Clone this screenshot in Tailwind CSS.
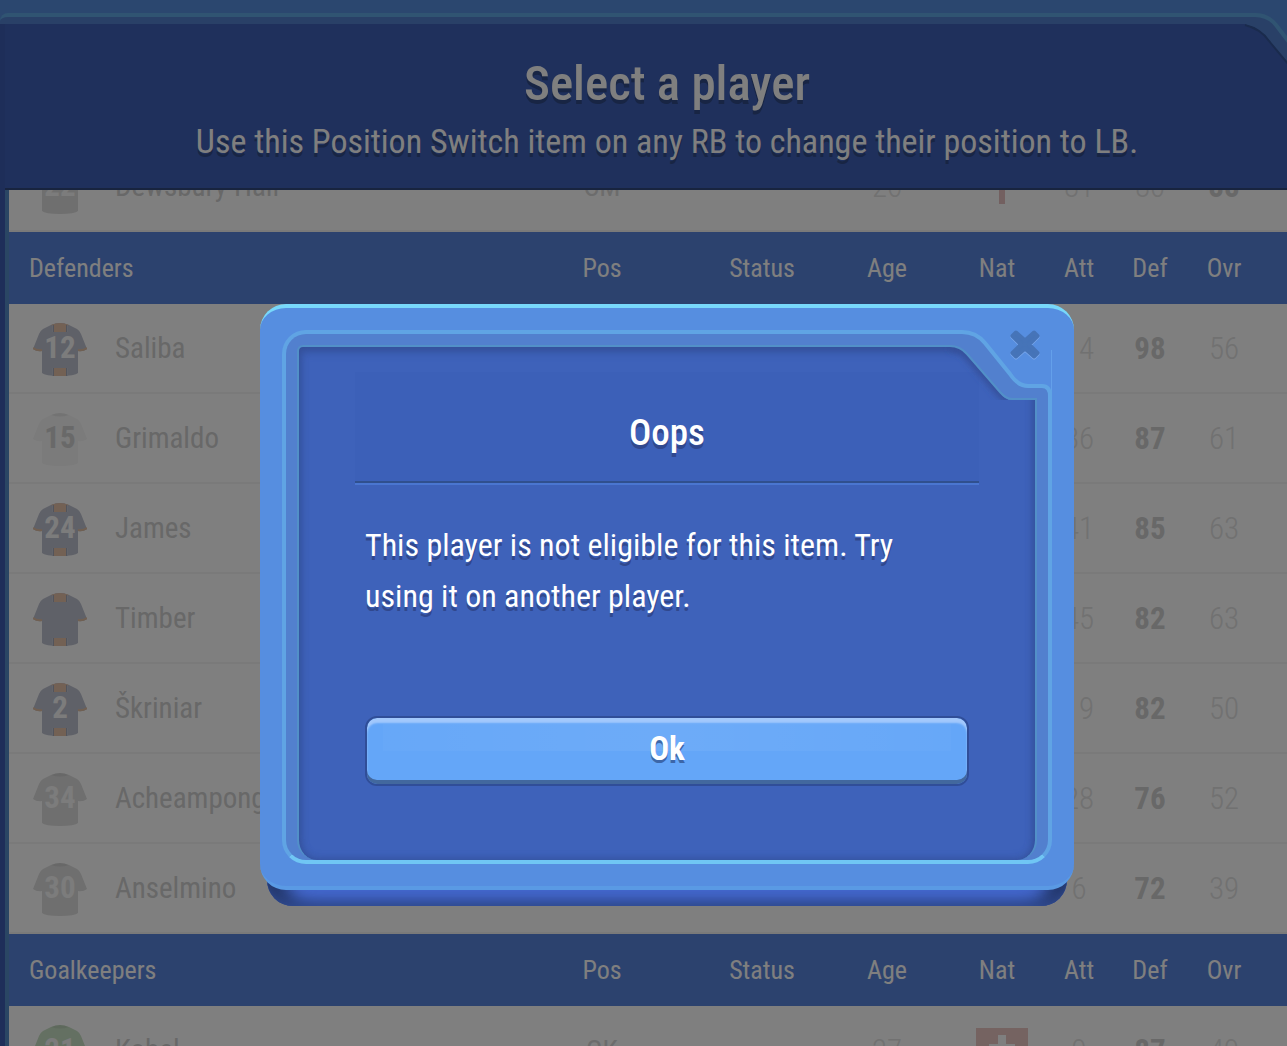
<!DOCTYPE html>
<html lang="en">
<head>
    <meta charset="UTF-8">
    <meta name="viewport" content="width=device-width, initial-scale=1.0">
    <title>Select a player</title>
    <script src="https://cdn.jsdelivr.net/npm/@tailwindcss/browser@4"></script>
</head>
<body class="bg-[#568ede] font-['Roboto_Condensed','Roboto',sans-serif] text-white">

    <!-- Shirt shapes shared by all rows -->
    <svg class="hidden" aria-hidden="true">
        <symbol id="shirt" viewBox="0 0 54 54">
            <path d="M18 2Q27 -2 36 2L44 6Q47 8 48 11L54 26Q50 29 45 28V50Q42 53 27 53Q12 53 9 50V28Q4 29 0 26L6 11Q7 8 10 6Z" fill="currentColor"/>
            <path d="M18 2Q27 -2 36 2Q27 5 18 2Z" fill="#000" opacity=".06"/>
        </symbol>
        <symbol id="stripes" viewBox="0 0 54 54">
            <path d="M19 2h16v7H19zM19 45h16v8H19z" fill="#c6cad6"/>
            <path d="M18 2Q27 -2 36 2L33 3V9H21V3ZM21 45h12v8H21z" fill="#e6c2a8"/>
            <path d="M20.500 2v7M33.500 2v7M20.500 45v8M33.500 45v8" stroke="#a4a8b8" stroke-width="1"/>
            <path d="M0 25Q4 28 9 27M54 25Q50 28 45 27" stroke="#e2c0a4" stroke-width="2" fill="none"/>
        </symbol>
    </svg>

    <div class="relative h-screen overflow-hidden">
        <div class="relative -mr-[42px] pt-[13px]">
            <!-- Outer frame -->
            <div class="rounded-tl-lg border-t-4 border-[#60a8e4] bg-[#5280ce] pt-[7px]">
                <div class="bg-[#3c5cb2] pl-[5px]">
                    <header class="relative z-10 flex h-[166px] flex-col items-center justify-center border-b-2 border-[#30487e] bg-[#3e60b8] pt-[10px] text-center">
                        <h1 class="text-[49px]/[60px] font-medium [text-shadow:0_4px_0_#304a88]">Select a player</h1>
                        <p class="text-[34px]/[54px] [text-shadow:0_4px_0_#304a88]">Use this Position Switch item on any RB to change their position to LB.</p>
                    </header>
                    <main class="-mt-12 border-l-4 border-[#548cc8] bg-white">
                        <table class="w-full table-fixed border-collapse text-center">
                            <colgroup>
                                <col class="w-[106px]"><col>
                                <col class="w-[170px]"><col class="w-[150px]"><col class="w-[100px]">
                                <col class="w-[120px]"><col class="w-[44px]"><col class="w-[98px]">
                                <col class="w-[50px]"><col class="w-[80px]">
                            </colgroup>
                            <tbody id="squad"></tbody>
                        </table>
                    </main>
                </div>
            </div>
        </div>

        <!-- Cut corner of the outer frame -->
        <svg class="absolute top-0 right-0 z-10 h-20 w-20" viewBox="0 0 80 80" aria-hidden="true">
            <path d="M30 13H80V62L62 40Q54 28 38 24H30Z" fill="#568ede"/>
            <path d="M30 15H48Q61 15 69 25L80 39V62L62 40Q54 28 38 24H30Z" fill="#5280ce"/>
            <path d="M30 15H48Q61 15 69 25L82 42" fill="none" stroke="#60a8e4" stroke-width="4"/>
            <path d="M38 25Q54 29 62 41L82 65" fill="none" stroke="#34569a" stroke-width="2"/>
        </svg>

        <!-- Dialog -->
        <div class="absolute inset-0 z-20 -mr-[47px] flex items-start justify-center bg-black/50 pt-[304px]">
            <section role="dialog" aria-modal="true" aria-labelledby="dialog-title" class="relative w-[814px] max-w-full">
                <div class="absolute inset-x-[7px] top-20 -bottom-4 rounded-[26px] bg-[#4468cc] shadow-[inset_0_-6px_14px_-4px_#34509a,inset_22px_0_18px_-4px_#203260,inset_-22px_0_18px_-4px_#203260]"></div>
                <div class="relative rounded-[26px] border-y-4 border-t-[#78d8fa] border-b-[#5a9ae4] bg-[#568ee0] p-[22px]">
                    <div class="rounded-3xl border-4 border-[#60a4e4] border-b-[#70c6f4] bg-[#5280ce] px-[11px] pt-[11px]">
                        <div class="rounded-t-md rounded-b-[20px] border-2 border-b-0 border-[#5290c8] bg-[#3e62ba] px-14 pt-[25px] pb-[74px] shadow-[inset_0_4px_10px_#34509a,inset_0_0_8px_#34509a]">
                            <div class="flex h-[111px] items-center justify-center border-b-2 border-[#30508e] bg-[#3c60b8] pt-3 shadow-[0_2px_0_#4a76d0]">
                                <h2 id="dialog-title" class="text-[37px]/[48px] font-medium [text-shadow:0_4px_0_#30488e]">Oops</h2>
                            </div>
                            <div class="px-[10px] pt-[37px]">
                                <p class="min-h-[196px] max-w-[560px] text-[32px]/[51px] [text-shadow:0_4px_0_#30488e]">This player is not eligible for this item. Try using it on another player.</p>
                                <button type="button" class="relative flex h-[70px] w-full items-center justify-center rounded-xl border-2 border-[#304e98] bg-[#64a6f8] pb-1 text-[33px] font-bold shadow-[inset_0_-4px_0_#42689e,inset_0_5px_2px_#a2c8fc] before:absolute before:inset-x-4 before:top-[6px] before:h-[27px] before:bg-linear-to-r before:from-white/2 before:via-white/6 before:to-white/2 [text-shadow:0_3px_0_#3c66a8]"><span class="relative">Ok</span></button>
                            </div>
                        </div>
                    </div>
                </div>

                <!-- Cut corner behind the close button -->
                <svg class="absolute top-[26px] right-[22px] h-[70px] w-[122px]" viewBox="0 0 122 70" aria-hidden="true">
                    <defs>
                        <filter id="soft" x="-20%" y="-20%" width="140%" height="140%"><feGaussianBlur stdDeviation="3"/></filter>
                        <clipPath id="well"><path d="M0 16H20Q30 16 37 24L70 62Q74 70 82 70H0Z"/></clipPath>
                    </defs>
                    <path d="M20 0H122V60H68L32 16H20Z" fill="#568ee0"/>
                    <path d="M0 2H32Q46 2 55 13L80 44Q86 56 98 56H112Q120 56 120 64V70H107H82Q76 70 70 64L37 24Q30 16 20 16H0Z" fill="#5280ce"/>
                    <path clip-path="url(#well)" d="M20 17Q30 17 37 25L70 63L79 70" fill="none" stroke="#34509a" stroke-width="8" filter="url(#soft)"/>
                    <path d="M0 16H20Q30 16 37 24L70 62Q76 69 82 69H107" fill="none" stroke="#5290c8" stroke-width="2"/>
                    <path d="M0 2H32Q46 2 55 13L80 44Q88 56 98 56H112Q120 56 120 66V70" fill="none" stroke="#60a4e4" stroke-width="4"/>
                    <path d="M121.500 20V60" stroke="#64a0ea" stroke-width="1"/>
                </svg>
                <button type="button" aria-label="Close" class="absolute top-[26px] right-[34px] size-[30px]">
                    <svg class="size-[30px]" viewBox="0 0 30 30" fill="none" stroke-width="4" stroke-linejoin="round">
                        <path d="M6 3.500 15 11.500 24 3.500 27.500 7 19 15.500 27.500 24 24 27.500 15 19.500 6 27.500 2.500 24 11 15.500 2.500 7Z" fill="#7aa8ec" stroke="#7aa8ec"/>
                        <path d="M6 2.500 15 10.500 24 2.500 27.500 6 19 14.500 27.500 23 24 26.500 15 18.500 6 26.500 2.500 23 11 14.500 2.500 6Z" fill="#4674b8" stroke="#4674b8"/>
                    </svg>
                </button>
            </section>
        </div>
    </div>

    <script>
        const navy = { shirt: 'text-[#bec2d0]', digits: 'fill-[#f8f8f8]', stripes: true };
        const grey = { shirt: 'text-[#dedede]', digits: 'fill-[#f8f8f8]' };
        const white = { shirt: 'text-[#f6f6f6]', digits: 'fill-[#d2d2d2]' };
        const green = { shirt: 'text-[#c8e0c4]', digits: 'fill-[#f6f6f6]' };

        const england = '<svg class="mx-auto h-[34px] w-[52px]" viewBox="0 0 52 34"><path d="M0 14h23V0h6v14h23v6H29v14h-6V20H0z" fill="#e6c0c0"/></svg>';
        const swiss = '<svg class="mx-auto h-[46px] w-[52px]" viewBox="0 0 52 46"><path fill="#eac6c2" d="M0 0h52v46H0z"/><path fill="#fff" d="M22 7h8v9h9v8h-9v9h-8v-9h-9v-8h9z"/></svg>';

        // number, name, position, age, nation, att, def, ovr, kit, main rating
        const groups = [
            { players: [[22, 'Dewsbury-Hall', 'CM', 26, england, 81, 80, 88, grey, 'ovr']] },
            { title: 'Defenders', players: [
                [12, 'Saliba', '', '', '', 14, 98, 56, navy],
                [15, 'Grimaldo', '', '', '', 36, 87, 61, white],
                [24, 'James', '', '', '', 41, 85, 63, navy],
                ['', 'Timber', '', '', '', 45, 82, 63, navy],
                [2, 'Škriniar', '', '', '', 19, 82, 50, navy],
                [34, 'Acheampong', '', '', '', 28, 76, 52, grey],
                [30, 'Anselmino', '', '', '', 6, 72, 39, grey],
            ] },
            { title: 'Goalkeepers', players: [[21, 'Kobel', 'GK', 27, swiss, 9, 87, 49, green]] },
        ];

        const thin = 'text-[31px] font-light text-[#e2e2e2]';
        const bold = 'text-[31px] font-bold text-[#d0d0d0]';

        const heading = (title) => `
            <tr class="h-[72px] bg-[#5884dc] text-[26px]">
                <th colspan="2" class="p-0 pl-5 text-left font-normal">${title}</th>
                ${['Pos', 'Status', 'Age', 'Nat', 'Att', 'Def', 'Ovr'].map((c) => `<th class="p-0 font-normal">${c}</th>`).join('')}
                <td></td>
            </tr>`;

        const row = ([no, name, pos, age, nat, att, def, ovr, kit, best]) => `
            <tr class="h-[90px] bg-[linear-gradient(#f4f4f4,#f4f4f4)] bg-[length:100%_2px] bg-bottom bg-no-repeat">
                <td class="p-0 pt-[2px]">
                    <svg class="ml-6 size-[54px] ${kit.shirt}" viewBox="0 0 54 54">
                        <use href="#shirt"/>
                        ${kit.stripes ? '<use href="#stripes"/>' : ''}
                        <text x="27" y="35" text-anchor="middle" class="text-[31px] font-bold ${kit.digits}">${no}</text>
                    </svg>
                </td>
                <td class="p-0 text-left text-[29px] text-[#d0d0d0]">${name}</td>
                <td class="p-0 text-[28px] text-[#d8d8d8]">${pos}</td>
                <td></td>
                <td class="p-0 ${thin}">${age}</td>
                <td class="p-0 pl-[10px]">${nat}</td>
                <td class="p-0 ${thin}">${att}</td>
                <td class="p-0 ${best ? thin : bold}">${def}</td>
                <td class="p-0 ${best ? bold : thin}">${ovr}</td>
                <td></td>
            </tr>`;

        document.getElementById('squad').innerHTML = groups
            .map((g) => (g.title ? heading(g.title) : '') + g.players.map(row).join(''))
            .join('');
    </script>
</body>
</html>
